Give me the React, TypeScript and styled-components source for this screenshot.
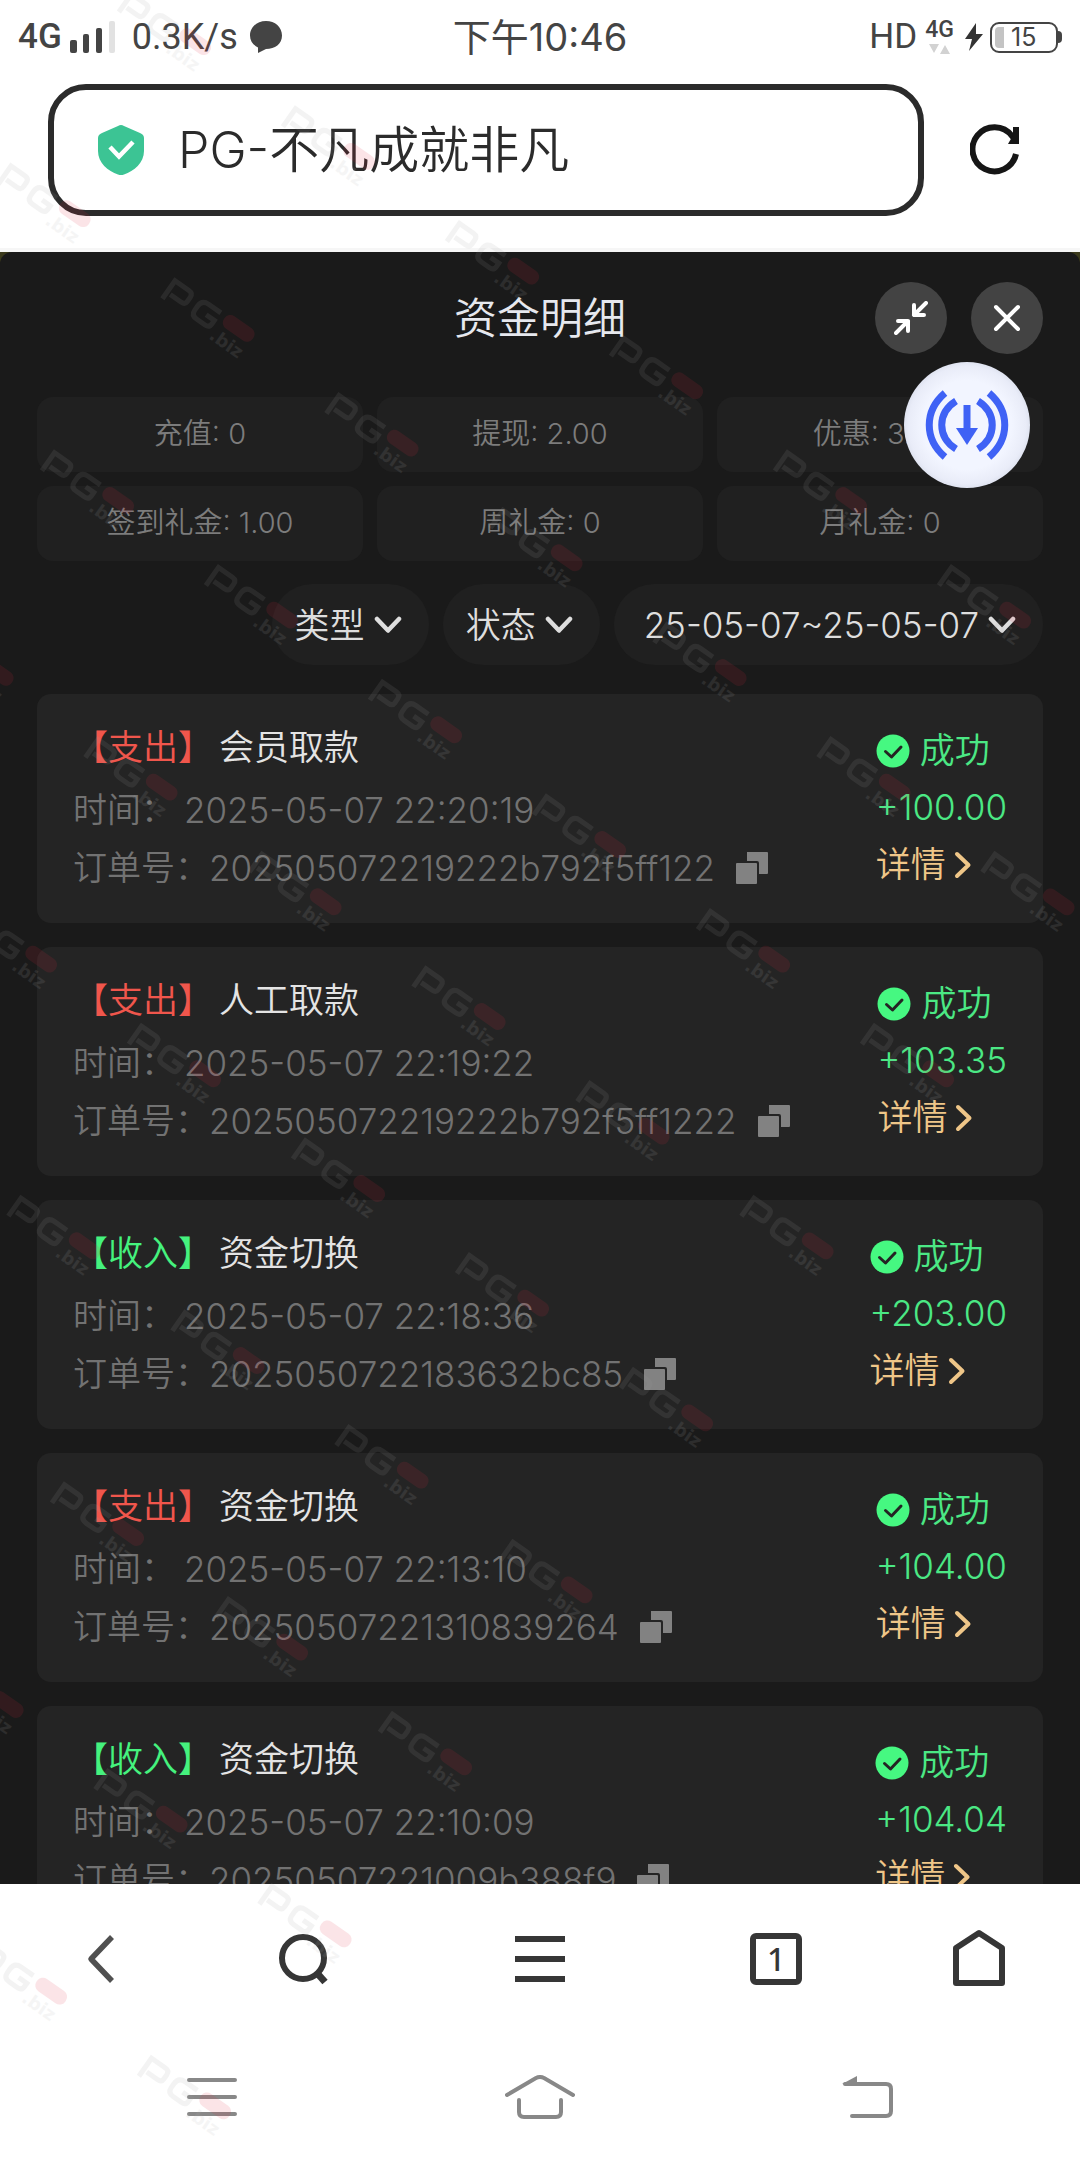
import React from "react";
import styled, { createGlobalStyle } from "styled-components";

const GlobalStyle = createGlobalStyle`
  *, *::before, *::after { box-sizing: border-box; }
  html, body { margin: 0; padding: 0; background: #fff; }
  body { font-family: Inter, "Noto Sans CJK SC", sans-serif; font-weight: 350; }
  button, input, select { font: inherit; color: inherit; background: none; border: 0; margin: 0; padding: 0; outline: 0; }
  button { cursor: pointer; }
  svg { display: block; flex: none; }
`;

const Page = styled.div`
  position: relative;
  display: flex;
  flex-direction: column;
  height: 100vh;
  overflow: hidden;
  background: #fff;
`;

/* ---------- system status bar ---------- */

const StatusBar = styled.header`
  display: grid;
  grid-template-columns: 1fr auto 1fr;
  align-items: center;
  height: 74px;
  padding: 0 18px;
  color: #444;
  font-weight: 400;
  font-size: 38px;
  line-height: 40px;
`;

const StatusGroup = styled.div<{ $end?: boolean }>`
  display: flex;
  align-items: center;
  justify-content: ${(p) => (p.$end ? "flex-end" : "flex-start")};
  gap: ${(p) => (p.$end ? "8px" : "12px")};
`;

const Carrier = styled.div`
  display: flex;
  align-items: flex-end;
  gap: 8px;
  font-family: Roboto, sans-serif;
  font-size: 35px;
  font-weight: 500;
  line-height: 32px;
`;

const Speed = styled.span`
  padding-left: 4px;
  font-family: Roboto, sans-serif;
  font-size: 36px;
`;

const Hd = styled.span`
  font-family: Roboto, sans-serif;
  font-size: 35px;
  font-weight: 400;
`;

const MiniNet = styled.div`
  display: flex;
  flex-direction: column;
  align-items: center;
  gap: 4px;
  font-family: Roboto, sans-serif;
  font-size: 23px;
  font-weight: 500;
  line-height: 20px;
`;

const BatteryRow = styled.div`
  display: flex;
  align-items: center;
`;

const Battery = styled.div`
  display: flex;
  align-items: center;
  width: 68px;
  height: 31px;
  padding: 3px;
  border: 2px solid #444;
  border-radius: 9px;
  font-size: 25px;
  line-height: 24px;
`;

const Charge = styled.span`
  width: 9px;
  height: 21px;
  margin-right: 7px;
  border-radius: 4px 0 0 4px;
  background: #c4c4c4;
`;

const Nub = styled.span`
  width: 4px;
  height: 12px;
  border-radius: 0 4px 4px 0;
  background: #444;
`;

/* ---------- address bar ---------- */

const AddressRow = styled.div`
  display: flex;
  align-items: center;
  padding: 10px 48px 32px;
  border-bottom: 4px solid #f6f6f6;
`;

const AddressBox = styled.label`
  display: flex;
  flex: 1;
  align-items: center;
  gap: 34px;
  min-width: 0;
  height: 132px;
  padding: 0 44px;
  border: 6px solid #2b2b2b;
  border-radius: 38px;
`;

const AddressInput = styled.input`
  flex: 1;
  min-width: 0;
  color: #2b2b2b;
  font-size: 50px;
  line-height: 60px;
`;

const ReloadButton = styled.button`
  flex: none;
  padding: 10px;
  margin-left: 36px;
`;

/* ---------- funds panel ---------- */

const PanelBackdrop = styled.div`
  display: flex;
  flex: 1;
  min-height: 0;
  background: #3b3a1c;
`;

const Panel = styled.main`
  position: relative;
  display: flex;
  flex: 1;
  flex-direction: column;
  min-width: 0;
  padding: 30px 37px 0;
  overflow: hidden;
  border-radius: 12px 12px 0 0;
  background: #1a1a1a;
`;

const PanelHead = styled.div`
  display: grid;
  grid-template-columns: 1fr auto 1fr;
  align-items: center;
  height: 72px;
`;

const PanelTitle = styled.h1`
  grid-column: 2;
  margin: 0;
  color: #e6e8ee;
  font-size: 43px;
  font-weight: 350;
  line-height: 60px;
`;

const HeadActions = styled.div`
  display: flex;
  justify-content: flex-end;
  gap: 24px;
`;

const RoundButton = styled.button`
  display: grid;
  place-items: center;
  width: 72px;
  height: 72px;
  border-radius: 50%;
  background: #434343;
`;

const Stats = styled.div`
  display: grid;
  grid-template-columns: repeat(3, 1fr);
  gap: 14px;
  margin-top: 43px;
`;

const Stat = styled.div`
  height: 75px;
  border-radius: 16px;
  background: #202020;
  color: #7c7c7c;
  font-size: 29px;
  line-height: 73px;
  text-align: center;
`;

const Filters = styled.div`
  display: flex;
  justify-content: flex-end;
  gap: 14px;
  margin-top: 23px;
`;

const pill = `
  display: flex;
  align-items: center;
  height: 81px;
  border-radius: 41px;
  background: #202020;
  color: #dedede;
  font-size: 35px;
  line-height: 48px;
`;

const FilterPill = styled.label`
  ${pill}
  padding: 0 27px 0 23px;
  gap: 9px;
`;

const FilterSelect = styled.select`
  appearance: none;
  field-sizing: content;
  cursor: pointer;
`;

const DateButton = styled.button`
  ${pill}
  padding: 0 27px 0 30px;
  gap: 9px;
`;

const Records = styled.ul`
  display: flex;
  flex-direction: column;
  flex: 1;
  gap: 24px;
  min-height: 0;
  margin: 29px 0 0;
  padding: 0;
  overflow-y: auto;
  scrollbar-width: none;
  list-style: none;
`;

const Card = styled.li`
  display: flex;
  flex: none;
  justify-content: space-between;
  padding: 24px 36px 26px;
  border-radius: 14px;
  background: #242424;
  font-size: 35px;
  line-height: 58px;
`;

const Info = styled.div`
  display: flex;
  flex-direction: column;
`;

const RecordTitle = styled.h2`
  display: flex;
  gap: 6px;
  margin: 0 0 5px;
  color: #e4e4e4;
  font-size: 35px;
  font-weight: 350;
`;

const Kind = styled.span<{ $income: boolean }>`
  color: ${(p) => (p.$income ? "#45f27e" : "#f0564c")};
`;

const Line = styled.div<{ $gap?: boolean }>`
  display: flex;
  align-items: center;
  height: 58px;
  gap: ${(p) => (p.$gap ? "9px" : "0")};
  color: #727272;
`;

const LineLabel = styled.span`
  font-size: 34px;
`;

const CopyButton = styled.button`
  margin-left: 21px;
`;

const Outcome = styled.div`
  display: flex;
  flex-direction: column;
  padding-top: 4px;
  color: #4be884;
  line-height: 57px;
`;

const State = styled.div`
  display: flex;
  align-items: center;
  gap: 10px;
  height: 57px;
`;

const DetailLink = styled.a`
  display: flex;
  align-items: center;
  gap: 8px;
  height: 57px;
  color: #efc688;
  text-decoration: none;
`;

const FloatButton = styled.button`
  position: absolute;
  top: 110px;
  right: 50px;
  display: grid;
  place-items: center;
  width: 126px;
  height: 126px;
  border-radius: 50%;
  background: radial-gradient(circle, #f2f5ff 50%, #e9ecf8 66%, #dfe3f0 71%);
`;

/* ---------- bottom bars ---------- */

const BrowserBar = styled.nav`
  display: grid;
  grid-template-columns: 3fr 3fr 4fr 3fr 3fr;
  place-items: center;
  height: 150px;
  background: #fff;
`;

const SystemBar = styled.nav`
  display: grid;
  grid-template-columns: repeat(3, 1fr);
  place-items: center;
  height: 126px;
  padding: 0 48px;
  background: #fff;
`;

const TabsButton = styled.button`
  width: 52px;
  height: 52px;
  border: 6px solid #363636;
  border-radius: 6px;
  color: #363636;
  font-family: "Noto Sans", sans-serif;
  font-size: 32px;
  font-weight: 500;
  line-height: 40px;
`;

const WatermarkLayer = styled.svg`
  position: absolute;
  inset: 0;
  width: 100%;
  height: 100%;
  pointer-events: none;
`;

/* ---------- icons ---------- */

const ChevronDown = () => (
  <svg width="28" height="18" viewBox="0 0 28 18" fill="none">
    <path d="M3 3l11 11.500L25 3" stroke="#dedede" strokeWidth="4.500" strokeLinecap="round" strokeLinejoin="round" />
  </svg>
);

const CheckIcon = () => (
  <svg width="34" height="34" viewBox="0 0 34 34" fill="none">
    <circle cx="17" cy="17" r="16.500" fill="#46f881" />
    <path d="M9.500 17.500l6 5.500 9.500-10" stroke="#242424" strokeWidth="3" strokeLinecap="round" strokeLinejoin="round" />
  </svg>
);

const CopyIcon = () => (
  <svg width="32" height="32" viewBox="0 0 32 32" fill="#828282">
    <path d="M11 0h20q1 0 1 1v20q0 1-1 1h-8V11q0-2-2-2H11z" />
    <rect x="0" y="11" width="21" height="21" rx="1" />
  </svg>
);

/* ---------- data ---------- */

interface RecordItem {
  income: boolean;
  title: string;
  time: string;
  order: string;
  amount: string;
}

const records: RecordItem[] = [
  { income: false, title: "会员取款", time: "2025-05-07 22:20:19", order: "202505072219222b792f5ff122", amount: "+100.00" },
  { income: false, title: "人工取款", time: "2025-05-07 22:19:22", order: "202505072219222b792f5ff1222", amount: "+103.35" },
  { income: true, title: "资金切换", time: "2025-05-07 22:18:36", order: "2025050722183632bc85", amount: "+203.00" },
  { income: false, title: "资金切换", time: "2025-05-07 22:13:10", order: "20250507221310839264", amount: "+104.00" },
  { income: true, title: "资金切换", time: "2025-05-07 22:10:09", order: "20250507221009b388f9", amount: "+104.04" },
];

const stats = ["充值: 0", "提现: 2.00", "优惠: 3.00", "签到礼金: 1.00", "周礼金: 0", "月礼金: 0"];

const Record = ({ item }: { item: RecordItem }) => (
  <Card>
    <Info>
      <RecordTitle>
        <Kind $income={item.income}>【{item.income ? "收入" : "支出"}】</Kind>
        <span>{item.title}</span>
      </RecordTitle>
      <Line $gap>
        <LineLabel>时间：</LineLabel>
        <span>{item.time}</span>
      </Line>
      <Line>
        <LineLabel>订单号：</LineLabel>
        <span>{item.order}</span>
        <CopyButton aria-label="复制">
          <CopyIcon />
        </CopyButton>
      </Line>
    </Info>
    <Outcome>
      <State>
        <CheckIcon />
        <span>成功</span>
      </State>
      <span>{item.amount}</span>
      <DetailLink href="#detail">
        <span>详情</span>
        <svg width="18" height="28" viewBox="0 0 18 28" fill="none">
          <path d="M3 3l11.500 11L3 25" stroke="#efc688" strokeWidth="4" strokeLinecap="round" strokeLinejoin="round" />
        </svg>
      </DetailLink>
    </Outcome>
  </Card>
);

/* Repeated diagonal site mark, laid out on a slanted lattice. */
const marks: [number, number][] = [];
for (let row = -1; row <= 7; row++) {
  for (let col = -1; col <= 5; col++) {
    marks.push([161 + col * 164 - row * 120.5, 299 + col * 114.7 + row * 172]);
  }
}

const Watermark = () => (
  <WatermarkLayer aria-hidden="true">
    <defs>
      <g id="site-mark" opacity="0.12">
        <g fill="none" stroke="#a0a0a0" strokeWidth="5">
          <path d="M1-1V-23H18Q23-23 23-18V-13Q23-9 18-9H5" />
          <path d="M57-23H42Q34-23 34-15V-10Q34-4 41-4H51Q56-4 56-9V-13H46" />
        </g>
        <rect x="63" y="-28" width="35" height="15" rx="7" fill="#e02840" />
        <text x="61" y="5" fill="#b4b4b4" fontFamily="DejaVu Sans, sans-serif" fontSize="18" fontWeight="700">
          .biz
        </text>
      </g>
    </defs>
    {marks.map(([x, y]) => (
      <use key={`${x}:${y}`} href="#site-mark" transform={`translate(${x} ${y}) rotate(35)`} />
    ))}
  </WatermarkLayer>
);

export default function App() {
  return (
    <Page>
      <GlobalStyle />
      <StatusBar>
        <StatusGroup>
          <Carrier>
            <span>4G</span>
            <svg width="46" height="32" viewBox="0 0 46 32" fill="#444">
              <rect x="0" y="19" width="7" height="13" rx="2" />
              <rect x="13" y="13" width="6" height="19" rx="2" />
              <rect x="26" y="7" width="6" height="25" rx="2" />
              <rect x="39" y="0" width="6" height="32" rx="2" fill="#e2e2e2" />
            </svg>
          </Carrier>
          <Speed>0.3K/s</Speed>
          <svg width="32" height="32" viewBox="0 0 32 32" fill="#444">
            <path d="M16 0C25 0 32 6 32 14.500S25 28 16 28l-8 4V26.500C3 24 0 20 0 14.500 0 6 7 0 16 0z" />
          </svg>
        </StatusGroup>
        <span>下午10:46</span>
        <StatusGroup $end>
          <Hd>HD</Hd>
          <MiniNet>
            <span>4G</span>
            <svg width="22" height="10" viewBox="0 0 22 10" fill="#d2d2d2">
              <path d="M0 0h10L5 9zM11 10h10L16 1z" />
            </svg>
          </MiniNet>
          <BatteryRow>
            <svg width="28" height="30" viewBox="0 0 28 30" fill="#333">
              <path d="M14 1L3 17h7L7 29 21 12h-7z" />
            </svg>
            <Battery>
              <Charge />
              15
            </Battery>
            <Nub />
          </BatteryRow>
        </StatusGroup>
      </StatusBar>

      <AddressRow>
        <AddressBox>
          <svg width="46" height="50" viewBox="0 0 46 50" fill="none">
            <path d="M20 1Q23-1 26 1L42 8Q46 9.500 46 13V26C46 38 36 46 26 49.500Q23 50.500 20 49.500C10 46 0 38 0 26V13Q0 9.500 4 8z" fill="#3cc494" />
            <path d="M12 22l9 9.500L35 17" stroke="#fff" strokeWidth="4.500" />
          </svg>
          <AddressInput aria-label="地址" defaultValue="PG-不凡成就非凡" />
        </AddressBox>
        <ReloadButton aria-label="刷新">
          <svg width="52" height="52" viewBox="0 0 52 52" fill="none" stroke="#161616" strokeWidth="6">
            <path d="M46 30A22 22 0 1 1 42 12L46 17" />
            <path d="M46 3V20" />
            <path d="M46 6V20H38z" fill="#161616" stroke="none" />
          </svg>
        </ReloadButton>
      </AddressRow>

      <PanelBackdrop>
        <Panel>
          <PanelHead>
            <PanelTitle>资金明细</PanelTitle>
            <HeadActions>
              <RoundButton aria-label="缩小">
                <svg width="34" height="34" viewBox="0 0 34 34" fill="none" stroke="#fff" strokeWidth="4" strokeLinecap="round" strokeLinejoin="round">
                  <path d="M32 2L20 14M20 4V14H30" />
                  <path d="M2 32L14 20M4 20H14V30" />
                </svg>
              </RoundButton>
              <RoundButton aria-label="关闭">
                <svg width="28" height="28" viewBox="0 0 28 28" fill="none" stroke="#fff" strokeWidth="4" strokeLinecap="round">
                  <path d="M3 3l22 22M25 3L3 25" />
                </svg>
              </RoundButton>
            </HeadActions>
          </PanelHead>

          <Stats>
            {stats.map((s) => (
              <Stat key={s}>{s}</Stat>
            ))}
          </Stats>

          <Filters>
            <FilterPill>
              <FilterSelect aria-label="类型">
                <option>类型</option>
              </FilterSelect>
              <ChevronDown />
            </FilterPill>
            <FilterPill>
              <FilterSelect aria-label="状态">
                <option>状态</option>
              </FilterSelect>
              <ChevronDown />
            </FilterPill>
            <DateButton>
              <span>25-05-07~25-05-07</span>
              <ChevronDown />
            </DateButton>
          </Filters>

          <Records>
            {records.map((r) => (
              <Record key={r.time} item={r} />
            ))}
          </Records>

          <FloatButton aria-label="下载">
            <svg width="84" height="72" viewBox="0 0 84 72" fill="none" stroke="#3f62f5" strokeWidth="7">
              <path d="M20 4C-1 22-1 50 20 68" />
              <path d="M64 4C85 22 85 50 64 68" />
              <path d="M31 12C12 24 12 48 31 60" />
              <path d="M53 12C72 24 72 48 53 60" />
              <path d="M42 16V42" />
              <path d="M31 39H53L42 56z" fill="#3f62f5" stroke="none" />
            </svg>
          </FloatButton>
        </Panel>
      </PanelBackdrop>

      <BrowserBar>
        <button aria-label="后退">
          <svg width="28" height="48" viewBox="0 0 28 48" fill="none">
            <path d="M25 2L4 24l21 22" stroke="#505050" strokeWidth="5.500" strokeLinejoin="round" />
          </svg>
        </button>
        <button aria-label="搜索">
          <svg width="52" height="52" viewBox="0 0 52 52" fill="none" stroke="#363636" strokeWidth="6">
            <circle cx="25" cy="25" r="21" />
            <path d="M39 40l8 9" strokeWidth="7" />
          </svg>
        </button>
        <button aria-label="菜单">
          <svg width="50" height="46" viewBox="0 0 50 46" fill="#363636">
            <path d="M0 0h50v6H0zM0 20h50v6H0zM0 40h50v6H0z" />
          </svg>
        </button>
        <TabsButton aria-label="标签页">1</TabsButton>
        <button aria-label="主页">
          <svg width="52" height="60" viewBox="0 0 52 60" fill="none" stroke="#363636" strokeWidth="6" strokeLinejoin="round">
            <path d="M3 19L26 4l23 15V54H3z" />
          </svg>
        </button>
      </BrowserBar>

      <SystemBar>
        <button aria-label="最近任务">
          <svg width="50" height="40" viewBox="0 0 50 40" fill="none" stroke="#888" strokeWidth="4" strokeLinecap="round">
            <path d="M2 3H48M2 20H48M2 37H48" />
          </svg>
        </button>
        <button aria-label="桌面">
          <svg width="70" height="44" viewBox="0 0 70 44" fill="none" stroke="#888" strokeWidth="4" strokeLinecap="round" strokeLinejoin="round">
            <path d="M2 20L31 3Q35 1 39 3L68 20" />
            <path d="M14 25V37Q14 42 19 42H51Q56 42 56 37V25" />
          </svg>
        </button>
        <button aria-label="返回">
          <svg width="52" height="44" viewBox="0 0 52 44" fill="none" stroke="#888" strokeWidth="4" strokeLinecap="round">
            <path d="M3 9H44Q49 9 49 14V36Q49 41 44 41H10" />
            <path d="M0 9L15 1V10z" fill="#888" stroke="none" />
          </svg>
        </button>
      </SystemBar>
      <Watermark />
    </Page>
  );
}
